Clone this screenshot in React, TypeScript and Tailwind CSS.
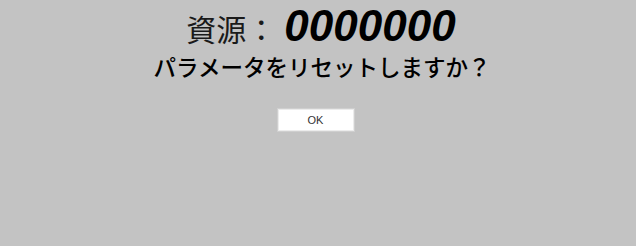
import React from "react";

export default function App() {
  return (
    <div className="w-[636px] h-[246px] bg-[#c3c3c3] flex flex-col items-center overflow-hidden">
      <div className="flex items-end pl-[6px] h-[48px]">
        <span className="text-[30px] leading-none text-[#1a1a1a] mb-[5px] font-['Noto_Sans_CJK_JP',sans-serif]">
          資源：
        </span>
        <span className="text-[44px] leading-none font-bold italic text-black ml-[8px] font-['Liberation_Sans',Arial,sans-serif]">
          0000000
        </span>
      </div>
      <div className="mt-[2px] pl-[8px] text-[22.5px] leading-[32px] font-medium text-black font-['Noto_Sans_CJK_JP',sans-serif]">
        パラメータをリセットしますか？
      </div>
      <button className="mt-[26px] w-[78px] h-[24px] bg-white border border-[#cfcfcf] shadow-[inset_0_0_0_1px_#ececec] flex items-center justify-center text-[11px] text-[#333] -ml-[5px] font-['Liberation_Sans',Arial,sans-serif]">
        OK
      </button>
    </div>
  );
}
